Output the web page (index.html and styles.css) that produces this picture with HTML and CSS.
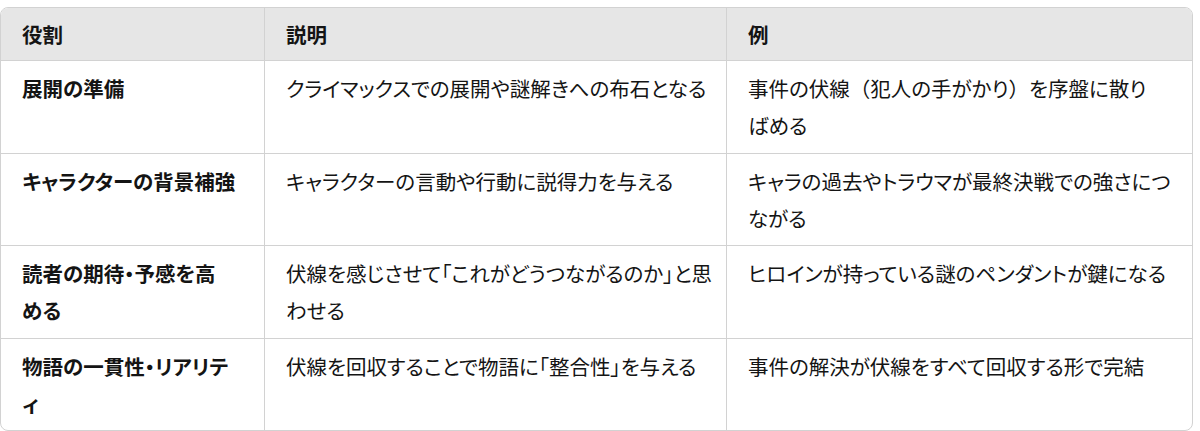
FILE: index.html
```html
<!DOCTYPE html>
<html lang="ja">
<head>
<meta charset="utf-8">
<link rel="stylesheet" href="styles.css">
</head>
<body>
<div class="wrap">
<table class="tbl">
  <colgroup>
    <col class="c1"><col class="c2"><col class="c3">
  </colgroup>
  <thead>
    <tr><th>役割</th><th>説明</th><th>例</th></tr>
  </thead>
  <tbody>
    <tr>
      <td class="role">展開の準備</td>
      <td>クライマックスでの展開や謎解きへの布石となる</td>
      <td>事件の伏線<span class="fw">（</span>犯人の手がかり<span class="fw">）</span>を序盤に散り<br>ばめる</td>
    </tr>
    <tr>
      <td class="role">キャラクターの背景補強</td>
      <td>キャラクターの言動や行動に説得力を与える</td>
      <td>キャラの過去やトラウマが最終決戦での強さにつ<br>ながる</td>
    </tr>
    <tr>
      <td class="role">読者の期待・予感を高<br>める</td>
      <td>伏線を感じさせて「これがどうつながるのか」と思<br>わせる</td>
      <td>ヒロインが持っている謎のペンダントが鍵になる</td>
    </tr>
    <tr>
      <td class="role">物語の一貫性・リアリテ<br>ィ</td>
      <td>伏線を回収することで物語に「整合性」を与える</td>
      <td>事件の解決が伏線をすべて回収する形で完結</td>
    </tr>
  </tbody>
</table>
</div>
</body>
</html>
```
FILE: styles.css
```css
html, body {
  margin: 0;
  padding: 0;
  background: #ffffff;
}
body {
  font-family: "Noto Sans CJK JP", "Noto Sans", sans-serif;
  color: #141414;
}
.wrap {
  padding-top: 7px;
  width: 1193px;
}
.tbl {
  width: 1193px;
  border-collapse: separate;
  border-spacing: 0;
  border: 1px solid #d2d2d2;
  border-radius: 8px;
  overflow: hidden;
  table-layout: fixed;
  font-size: 20.5px;
  font-feature-settings: "palt";
}
.c1 { width: 263px; }
.c2 { width: 462px; }
.c3 { width: auto; }
.tbl th, .tbl td {
  text-align: left;
  vertical-align: top;
  line-height: 37px;
  padding: 9px 8px 8.5px 21px;
  border-left: 1px solid #d2d2d2;
  border-top: 1px solid #d2d2d2;
}
.tbl th:first-child, .tbl td:first-child {
  border-left: none;
}
.tbl thead th {
  border-top: none;
  padding-top: 8px;
  padding-bottom: 7px;
  background: #e6e6e6;
  font-weight: 700;
}
.tbl td.role {
  font-weight: 700;
}
.fw {
  font-feature-settings: normal;
}
```
